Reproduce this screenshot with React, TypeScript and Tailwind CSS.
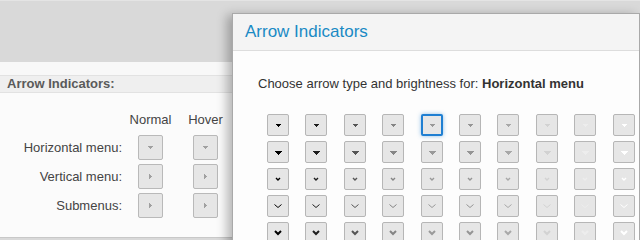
import React from "react";

const shades = ["#000000", "#1e1e1e", "#555555", "#858585", "#999999", "#959595", "#a8a8a8", "#d2d2d2", "#ededed", "#ffffff"];

function Arrow({ kind, color }: { kind: number; color: string }) {
  if (kind === 0) {
    return (
      <svg width="22" height="22" viewBox="0 0 22 22" shapeRendering="crispEdges">
        <rect x="8.5" y="10" width="5" height="1" fill={color} />
        <rect x="9.5" y="11" width="3" height="1" fill={color} />
        <rect x="10.5" y="12" width="1" height="1" fill={color} />
      </svg>
    );
  }
  if (kind === 1) {
    return (
      <svg width="22" height="22" viewBox="0 0 22 22" shapeRendering="crispEdges">
        <rect x="7.5" y="10" width="7" height="1" fill={color} />
        <rect x="8.5" y="11" width="5" height="1" fill={color} />
        <rect x="9.5" y="12" width="3" height="1" fill={color} />
        <rect x="10.5" y="13" width="1" height="1" fill={color} />
      </svg>
    );
  }
  const pts = kind === 2 ? "9,10 11,12 13,10" : kind === 3 ? "7.5,9.5 11,12.5 14.5,9.5" : "8,9 11,12 14,9";
  const sw = kind === 2 ? 1.4 : kind === 3 ? 1 : 2;
  return (
    <svg width="22" height="22" viewBox="0 0 22 22">
      <polyline points={pts} fill="none" stroke={color} strokeWidth={sw} strokeLinecap="butt" strokeLinejoin="miter" />
    </svg>
  );
}

function SmallButton({ dir }: { dir: "down" | "right" }) {
  return (
    <div className="flex h-[25px] w-[25px] items-center justify-center rounded-[2px] border border-[#b9b9b9] bg-[#e6e6e6]">
      <svg width="23" height="23" viewBox="0 0 23 23" shapeRendering="crispEdges">
        {dir === "down" ? (
          <>
            <rect x="9" y="10" width="5" height="1" fill="#a0a0a0" />
            <rect x="10" y="11" width="3" height="1" fill="#a0a0a0" />
            <rect x="11" y="12" width="1" height="1" fill="#a0a0a0" />
          </>
        ) : (
          <>
            <rect x="10" y="9" width="1" height="5" fill="#a0a0a0" />
            <rect x="11" y="10" width="1" height="3" fill="#a0a0a0" />
            <rect x="12" y="11" width="1" height="1" fill="#a0a0a0" />
          </>
        )}
      </svg>
    </div>
  );
}

const rows = [
  { label: "Horizontal menu:", dir: "down" as const },
  { label: "Vertical menu:", dir: "right" as const },
  { label: "Submenus:", dir: "right" as const },
];

export default function App() {
  return (
    <div className="relative h-[240px] w-[640px] overflow-hidden bg-[#d9d9d9] font-['Liberation_Sans',Arial,sans-serif] text-[13px]">
      <div className="h-[62px] border-t border-[#e4e4e4]" />
      <div className="h-[176px] border-b border-[#c8c8c8] bg-[#fbfbfb]">
        <div className="h-[13px] bg-[#f8f8f8]" />
        <div className="flex h-[18px] items-center border-y border-[#e2e2e2] bg-[#efefef] pl-[7px] font-bold text-[#5a5a5a]">
          Arrow Indicators:
        </div>
        <div className="pt-[19px] text-[#444]">
          <div className="flex h-[16px] items-center leading-[16px]">
            <div className="w-[138px]" />
            <div className="flex w-[25px] justify-center whitespace-nowrap">Normal</div>
            <div className="ml-[30px] flex w-[25px] justify-center whitespace-nowrap">Hover</div>
          </div>
          <div className="mt-[7px] flex flex-col gap-[4px]">
            {rows.map((r) => (
              <div key={r.label} className="flex h-[25px] items-center">
                <div className="w-[123px] pr-[1px] text-right">{r.label}</div>
                <div className="ml-[15px]">
                  <SmallButton dir={r.dir} />
                </div>
                <div className="ml-[30px]">
                  <SmallButton dir={r.dir} />
                </div>
              </div>
            ))}
          </div>
        </div>
      </div>

      <div className="absolute bottom-[-20px] left-[232px] right-0 top-[13px] border-x border-t border-[#a9a9a9] bg-[#fdfdfd] shadow-[-5px_2px_10px_rgba(0,0,0,0.28)]">
        <div className="flex h-[37px] items-center border-b border-[#dddddd] bg-[#f4f4f4] pl-[12px] text-[17px] text-[#1a8ac4]">
          Arrow Indicators
        </div>
        <div className="pl-[25px] pt-[25px]">
          <div className="h-[16px] leading-[16px] text-[#333]">
            Choose arrow type and brightness for: <span className="font-bold">Horizontal menu</span>
          </div>
          <div className="ml-[9px] mt-[22px] grid grid-cols-[repeat(10,22px)] gap-x-[16.4px] gap-y-[5px]">
            {[0, 1, 2, 3, 4].map((kind) =>
              shades.map((c, i) => {
                const selected = kind === 0 && i === 4;
                return (
                  <div
                    key={`${kind}-${i}`}
                    className={
                      selected
                        ? "flex h-[22px] w-[22px] items-center justify-center rounded-[2px] border-2 border-[#1f7fd2] bg-[#e6e6e6] shadow-[0_0_4px_rgba(31,127,210,0.5)]"
                        : "flex h-[22px] w-[22px] items-center justify-center rounded-[2px] border border-[#b6b6b6] bg-[#e6e6e6]"
                    }
                  >
                    <div className="shrink-0">
                      <Arrow kind={kind} color={c} />
                    </div>
                  </div>
                );
              })
            )}
          </div>
        </div>
      </div>
    </div>
  );
}
